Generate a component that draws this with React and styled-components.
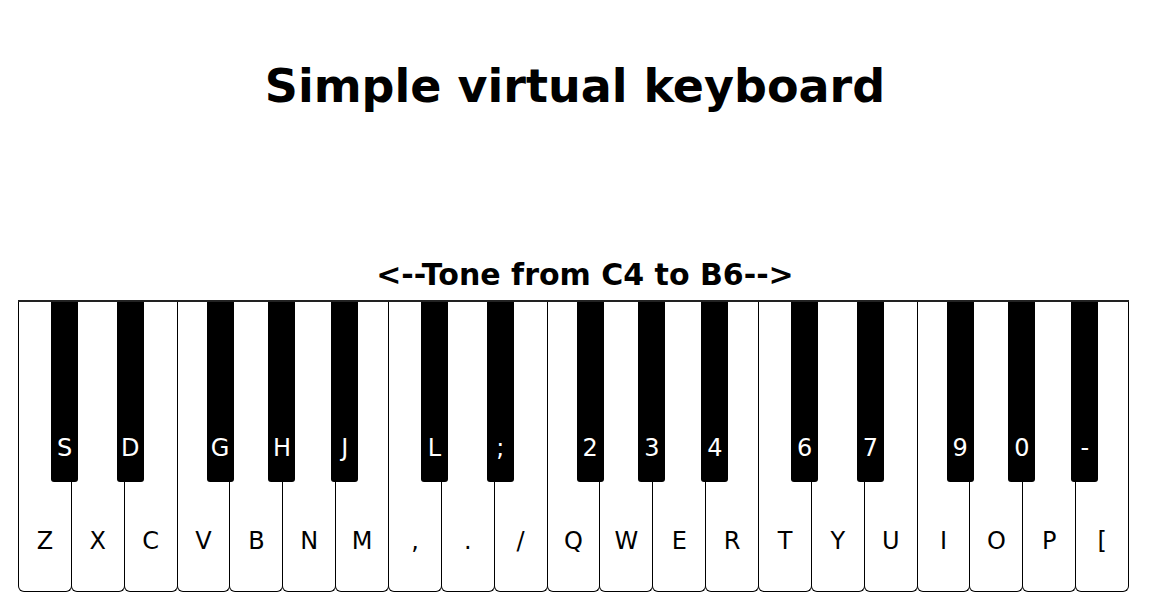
import React from "react";
import styled, { createGlobalStyle } from "styled-components";

const GlobalStyle = createGlobalStyle`
  body {
    margin: 0;
    background: #fff;
    font-family: "DejaVu Sans", "Liberation Sans", sans-serif;
  }
`;

const Page = styled.div`
  width: 1150px;
  display: flex;
  flex-direction: column;
  align-items: center;
`;

const Title = styled.h1`
  margin: 58px 0 0;
  font-size: 46px;
  line-height: 56px;
  font-weight: bold;
  color: #000;
`;

const Subtitle = styled.h2`
  margin: 143px 0 0;
  padding-left: 20px;
  font-size: 30px;
  line-height: 35px;
  font-weight: bold;
  color: #000;
`;

const Keyboard = styled.div`
  margin: 8px 21px 0 18px;
  width: 1111px;
  align-self: flex-start;
  display: flex;
  border-top: 2px solid #222;
`;

const WhiteKey = styled.div`
  position: relative;
  flex: 1;
  height: 290px;
  border: 1px solid #000;
  border-top: none;
  border-radius: 0 0 6px 6px;
  margin-left: -1px;
  background: #fff;
  display: flex;
  align-items: flex-end;
  justify-content: center;
  padding-bottom: 36px;
  box-sizing: border-box;
  font-size: 24px;
  line-height: 28px;
  color: #000;
  &:first-child {
    margin-left: 0;
  }
`;

const BlackKey = styled.div`
  position: absolute;
  top: 0;
  left: ${(p) => p.$left}px;
  z-index: 1;
  width: 27px;
  height: 180px;
  background: #000;
  border-radius: 0 0 3px 3px;
  display: flex;
  align-items: flex-end;
  justify-content: center;
  padding-bottom: 20px;
  box-sizing: border-box;
  color: #fff;
  font-size: 24px;
  line-height: 28px;
`;

const whites = ["Z", "X", "C", "V", "B", "N", "M", ",", ".", "/", "Q", "W", "E", "R", "T", "Y", "U", "I", "O", "P", "["];

// offset of the black key inside its white key, per position in the octave
const blacksPerOctave = { 0: 32, 1: 45, 3: 29, 4: 38, 5: 48 };
const blacks = ["S", "D", "G", "H", "J", "L", ";", "2", "3", "4", "6", "7", "9", "0", "-"];

export default function App() {
  let bi = 0;
  return (
    <Page>
      <GlobalStyle />
      <Title>Simple virtual keyboard</Title>
      <Subtitle>{"<--Tone from C4 to B6-->"}</Subtitle>
      <Keyboard>
        {whites.map((w, i) => {
          const off = blacksPerOctave[i % 7];
          const label = off !== undefined ? blacks[bi++] : null;
          return (
            <WhiteKey key={w}>
              {w}
              {label !== null && <BlackKey $left={off}>{label}</BlackKey>}
            </WhiteKey>
          );
        })}
      </Keyboard>
    </Page>
  );
}
